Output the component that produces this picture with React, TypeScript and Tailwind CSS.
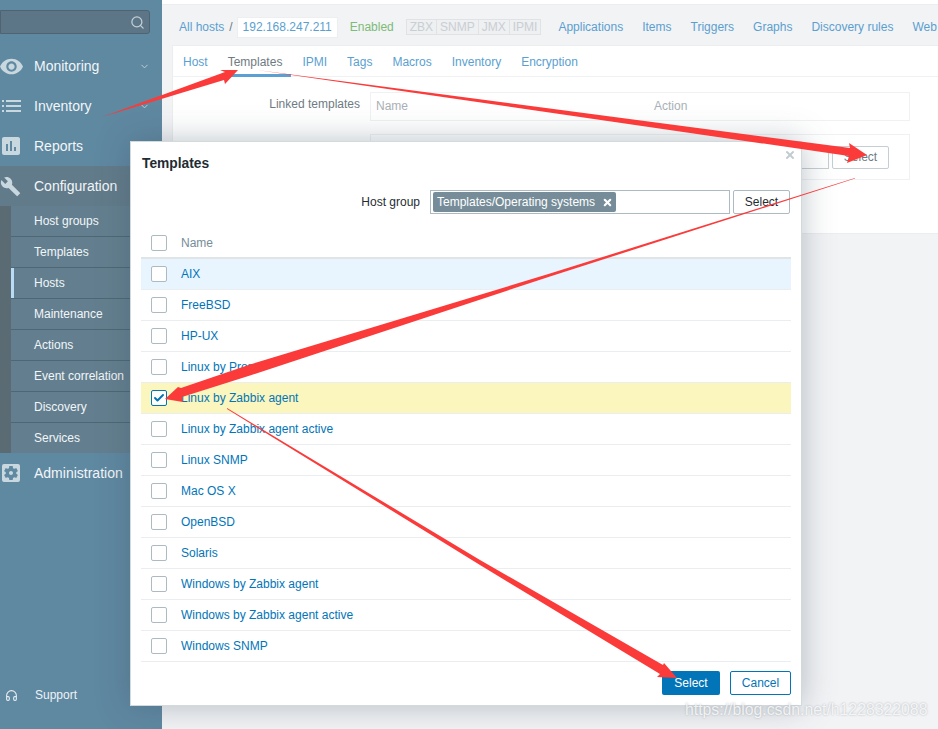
import { ChevronDown, Headphones, Search, X, Check } from "lucide-react"
import { MdRemoveRedEye, MdAssessment, MdBuild, MdSettingsApplications } from "react-icons/md"
import type { ReactNode } from "react"

const subItems = ["Host groups", "Templates", "Hosts", "Maintenance", "Actions", "Event correlation", "Discovery", "Services"]
const hostLinks = ["Applications", "Items", "Triggers", "Graphs", "Discovery rules", "Web"]
const tabs = ["Host", "Templates", "IPMI", "Tags", "Macros", "Inventory", "Encryption"]
const templates = [
  "AIX", "FreeBSD", "HP-UX", "Linux by Prom", "Linux by Zabbix agent", "Linux by Zabbix agent active",
  "Linux SNMP", "Mac OS X", "OpenBSD", "Solaris", "Windows by Zabbix agent", "Windows by Zabbix agent active", "Windows SNMP",
]

function NavRow({ icon, label, arrow }: { icon: ReactNode; label: string; arrow?: boolean }) {
  return (
    <div className="flex items-center h-10 text-[14px] text-[#f2f6f8]">
      <div className="w-[34px] flex items-center text-[#c9d7df]">{icon}</div>
      <span className="flex-1">{label}</span>
      {arrow && <ChevronDown size={11} className="mr-[12px] text-[#c5d3db]" />}
    </div>
  )
}

function ListIcon() {
  return (
    <svg width="20" height="14" viewBox="0 0 20 14" fill="currentColor" className="ml-[2px]">
      <rect x="0" y="1" width="2" height="2" />
      <rect x="0" y="6" width="2" height="2" />
      <rect x="0" y="11" width="2" height="2" />
      <rect x="4" y="1" width="15" height="2" />
      <rect x="4" y="6" width="15" height="2" />
      <rect x="4" y="11" width="15" height="2" />
    </svg>
  )
}

function Sidebar() {
  return (
    <div className="w-[162px] shrink-0 h-full flex flex-col bg-[#5f88a1]">
      <div className="mt-[10px] mr-3 h-[24px] shrink-0 bg-[#5d7687] border border-[#4f6472] rounded-r-[3px] flex items-center justify-end pr-1">
        <Search size={15} className="text-[#c4d0d7]" />
      </div>
      <div className="mt-3">
        <NavRow icon={<MdRemoveRedEye size={25} className="-ml-[1px]" />} label="Monitoring" arrow />
        <NavRow icon={<ListIcon />} label="Inventory" arrow />
        <NavRow icon={<MdAssessment size={24} className="-ml-[1px]" />} label="Reports" />
        <div className="bg-[#627b8a]">
          <NavRow icon={<MdBuild size={21} />} label="Configuration" />
        </div>
        <div className="flex bg-[#5b6b74] pl-[11px]">
          <div className="flex-1">
            {subItems.map((item) => (
              <div
                key={item}
                className={`h-[31px] flex items-center pl-[23px] text-[12px] text-[#f2f6f8] bg-[#637f8f] border-b border-[#4f6674] ${item === "Hosts" ? "shadow-[inset_3px_0_0_#b8dcf5]" : ""}`}
              >
                {item}
              </div>
            ))}
          </div>
        </div>
        <div className="relative -mt-[1px] bg-[#5f88a1]">
          <NavRow icon={<MdSettingsApplications size={24} className="-ml-[1px]" />} label="Administration" />
        </div>
      </div>
      <div className="mt-auto mb-[26px] flex items-center h-4 pl-[5px] text-[12px] text-[#eef3f6]">
        <Headphones size={13} className="mr-[17px] text-[#e6edf1]" />
        Support
      </div>
    </div>
  )
}

function Main() {
  return (
    <div className="flex-1 min-w-0 h-full overflow-hidden bg-[#f2f3f5] flex flex-col">
      <div className="h-[5px] shrink-0 bg-white border-b border-[#ebedef]" />
      <div className="h-[40px] shrink-0 pt-[4px] pl-[17px] flex items-center whitespace-nowrap text-[12px] text-[#5b9fd0]">
        <span>All hosts</span>
        <span className="ml-[5px] mr-[4px] text-[#6d7a82]">/</span>
        <span className="h-[21px] w-[101px] bg-white border border-[#eceef0] flex items-center justify-center">192.168.247.211</span>
        <span className="ml-[12px] text-[#7cbb78]">Enabled</span>
        <div className="ml-[12px] flex h-[16px] items-stretch border border-[#dfe3e5] text-[#c9ced2] text-[12px] leading-[14px] bg-[#eef0f2]">
          <span className="px-[3px] border-r border-[#dfe3e5]">ZBX</span>
          <span className="px-[3px] border-r border-[#dfe3e5]">SNMP</span>
          <span className="px-[3px] border-r border-[#dfe3e5]">JMX</span>
          <span className="px-[3px]">IPMI</span>
        </div>
        <div className="ml-[17px] flex gap-[19px]">
          {hostLinks.map((link) => (
            <span key={link}>{link}</span>
          ))}
        </div>
      </div>
      <div className="ml-[10px] h-[189px] shrink-0 bg-white border-t border-l border-b border-[#ebedef]">
        <div className="h-[31px] pl-[10px] flex items-start gap-[20px] border-b border-[#f0f1f3] text-[12px] text-[#5b9fd0]">
          {tabs.map((tab) =>
            tab === "Templates" ? (
              <div key={tab} className="pt-[7px] h-[31px] pr-[9px] -mr-[9px] text-[#6f7b83] border-b-[3px] border-[#5aa0d2]">
                {tab}
              </div>
            ) : (
              <div key={tab} className="pt-[7px]">{tab}</div>
            ),
          )}
        </div>
        <div className="pt-[15px] pr-[28px] flex items-start">
          <div className="w-[187px] shrink-0 text-right text-[12px] text-[#6f7b83] pt-[3px]">Linked templates</div>
          <div className="ml-[10px] flex-1">
            <div className="h-[29px] pl-[5px] pb-[2px] flex items-center border border-[#f0f1f3] text-[12px] text-[#a9b1b6]">
              <span className="w-[278px]">Name</span>
              <span>Action</span>
            </div>
            <div className="mt-[13px] h-[46px] border border-[#f0f1f3] flex items-center justify-end pr-[20px] gap-[3px]">
              <div className="h-[23px] w-[120px] border border-[#c5ced3]" />
              <div className="h-[23px] w-[57px] border border-[#c5ced3] rounded-[2px] flex items-center justify-center text-[12px] text-[#6f7b83]">
                Select
              </div>
            </div>
          </div>
        </div>
      </div>
    </div>
  )
}

function TemplatesDialog() {
  return (
    <div className="absolute left-[130px] top-[141px] w-[672px] h-[565px] bg-white border border-[#d3dade] shadow-[0_0_30px_rgba(60,80,95,0.35)] px-[10px]">
      <X size={12} strokeWidth={4} className="absolute right-[5px] top-[7px] text-[#c2cbd0]" />
      <div className="pt-[14px] pl-[1px] text-[13.8px] font-bold leading-[16px] text-[#1f2c33]">Templates</div>
      <div className="mt-[18px] flex items-center justify-end text-[12px] text-[#1f2c33] pr-[1px]">
        <span className="mr-[10px]">Host group</span>
        <div className="h-[24px] w-[300px] border border-[#acbbc2] flex items-center pl-[2px]">
          <div className="h-[20px] w-[183px] bg-[#768d99] rounded-[2px] flex items-center pl-[4px] text-white">
            <span className="flex-1">Templates/Operating systems</span>
            <X size={11} strokeWidth={4.5} className="mr-[3px]" />
          </div>
        </div>
        <div className="ml-[3px] h-[24px] w-[57px] border border-[#acbbc2] rounded-[2px] flex items-center justify-center">Select</div>
      </div>
      <div className="mt-[14px] h-[31px] flex items-center pl-[10px] border-b-2 border-[#dfe4e7] text-[12px] text-[#768d99]">
        <div className="w-4 h-4 border border-[#acbbc2] rounded-[2px] mr-[14px]" />
        Name
      </div>
      <div>
        {templates.map((name) => {
          const checked = name === "Linux by Zabbix agent"
          return (
            <div
              key={name}
              className={`h-[31px] flex items-center pl-[10px] border-b border-[#ebeef0] text-[12px] text-[#0275b8] ${checked ? "bg-[#fbf5be]" : name === "AIX" ? "bg-[#e8f5ff]" : "bg-white"}`}
            >
              <div className={`w-4 h-4 rounded-[2px] mr-[14px] bg-white flex items-center justify-center ${checked ? "border border-[#0275b8]" : "border border-[#acbbc2]"}`}>
                {checked && <Check size={12} strokeWidth={4} className="text-[#0275b8]" />}
              </div>
              {name}
            </div>
          )
        })}
      </div>
      <div className="mt-[9px] flex justify-end gap-[10px] text-[12px]">
        <div className="h-[24px] w-[58px] bg-[#0275b8] rounded-[2px] flex items-center justify-center text-white">Select</div>
        <div className="h-[24px] w-[61px] border border-[#0275b8] rounded-[2px] flex items-center justify-center text-[#0275b8]">Cancel</div>
      </div>
    </div>
  )
}

// the red annotation arrows drawn on top of the screenshot
function Arrows() {
  return (
    <svg className="absolute inset-0 pointer-events-none" width="938" height="729" viewBox="0 0 938 729">
      <g fill="#fb3a3a">
        <polygon points="102,117 225,72 220,70 238,70 225,84 224,80" />
        <polygon points="257,70 850,148 849,143 867,155 847,163 849,156" />
        <polygon points="855,178 550,273.5 250,364.5 181,388 178,387 165,399 183,402 182,397 250,375.5 550,276.5 855,178.5" />
        <polygon points="227,408 480,560 663,665 664,663 677,678 657,677 660,674 480,565 227,409" />
      </g>
    </svg>
  )
}

export default function App() {
  return (
    <div className="relative w-[938px] h-[729px] overflow-hidden flex font-['Liberation_Sans',Arial,sans-serif]">
      <Sidebar />
      <Main />
      <TemplatesDialog />
      <Arrows />
      <div className="absolute left-[685px] top-[701px] text-[15.8px] leading-[18px] text-white/80 [text-shadow:0_0_2px_rgba(120,130,140,0.6)]">
        https://blog.csdn.net/h1228322088
      </div>
    </div>
  )
}
